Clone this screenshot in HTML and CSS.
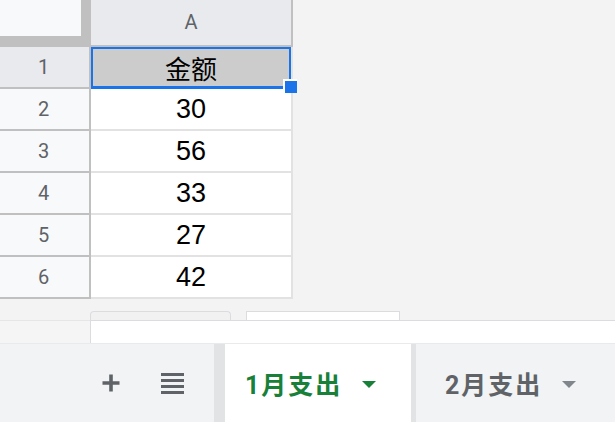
FILE: index.html
```html
<!DOCTYPE html>
<html lang="zh">
<head>
<meta charset="utf-8">
<link rel="stylesheet" href="styles.css">
</head>
<body>
<div class="sheet">
  <div class="grid">
    <div class="corner"><div class="corner-box"></div></div>
    <div class="col-head">A</div>

    <div class="row-head row-head-active">1</div>
    <div class="cell cell-selected">金额<span class="fill-handle"></span></div>

    <div class="row-head">2</div>
    <div class="cell num">30</div>

    <div class="row-head">3</div>
    <div class="cell num">56</div>

    <div class="row-head">4</div>
    <div class="cell num">33</div>

    <div class="row-head">5</div>
    <div class="cell num">27</div>

    <div class="row-head">6</div>
    <div class="cell num">42</div>
  </div>

  <div class="scroll-strip">
    <div class="strip-tab"></div>
    <div class="strip-box"></div>
  </div>

  <div class="hbar">
    <div class="hbar-left"></div>
    <div class="hbar-main"></div>
  </div>

  <div class="tabbar">
    <div class="tools">
      <svg class="icon-plus" width="20" height="20" viewBox="0 0 20 20"><path d="M10 1.5v17M1.5 10h17" stroke="#5f6368" stroke-width="3.6" fill="none"/></svg>
      <svg class="icon-menu" width="23" height="21" viewBox="0 0 23 21"><rect x="0" y="0" width="23" height="3" fill="#5f6368"/><rect x="0" y="6" width="23" height="3" fill="#5f6368"/><rect x="0" y="12" width="23" height="3" fill="#5f6368"/><rect x="0" y="18" width="23" height="3" fill="#5f6368"/></svg>
    </div>
    <div class="sep sep-wide"></div>
    <div class="tab tab-active">
      <span class="tab-label">1月支出</span>
      <span class="caret caret-active"></span>
    </div>
    <div class="sep sep-narrow"></div>
    <div class="tab tab-other">
      <span class="tab-label">2月支出</span>
      <span class="caret caret-other"></span>
    </div>
  </div>
</div>
</body>
</html>
```

FILE: styles.css
```css
html, body {
  margin: 0;
  padding: 0;
}
body {
  width: 615px;
  height: 422px;
  overflow: hidden;
  background: #f3f3f3;
  font-family: Roboto, "Noto Sans CJK SC", sans-serif;
}
.sheet {
  display: flex;
  flex-direction: column;
  height: 422px;
}
.grid {
  display: grid;
  grid-template-columns: 91px 202px;
  grid-template-rows: 47px repeat(6, 42px);
}
.grid > div {
  box-sizing: border-box;
}
.corner {
  background: #c0c0c0;
}
.corner-box {
  width: 81px;
  height: 36px;
  background: #f8f9fa;
}
.col-head {
  background: #e8eaed;
  border-right: 2px solid #c0c0c0;
  border-bottom: 2px solid #c0c0c0;
  color: #5f6368;
  font-size: 20px;
  display: flex;
  align-items: center;
  justify-content: center;
  padding-bottom: 1px;
}
.row-head {
  background: #f8f9fa;
  border-right: 2px solid #c0c0c0;
  border-bottom: 2px solid #c0c0c0;
  color: #5f6368;
  font-size: 20px;
  display: flex;
  align-items: center;
  justify-content: center;
  padding-right: 2px;
}
.row-head-active {
  background: #e8eaed;
}
.cell {
  background: #ffffff;
  border-right: 2px solid #e2e2e2;
  border-bottom: 2px solid #e2e2e2;
  display: flex;
  align-items: center;
  justify-content: center;
  color: #000;
}
.num {
  font-family: "Liberation Sans", Arial, sans-serif;
  font-size: 27px;
}
.cell-selected {
  position: relative;
  background: #cccccc;
  font-family: "Noto Sans CJK SC", sans-serif;
  font-size: 26px;
}
.cell-selected::after {
  content: "";
  position: absolute;
  left: 0;
  top: 0;
  right: 0;
  bottom: -2px;
  border: 2px solid #1a73e8;
  border-bottom-width: 3px;
}
.fill-handle {
  position: absolute;
  left: 192px;
  top: 32px;
  width: 12px;
  height: 12px;
  background: #1a73e8;
  border-left: 2px solid #ffffff;
  border-top: 2px solid #ffffff;
  z-index: 2;
}
.scroll-strip {
  margin-top: 12px;
  height: 9px;
  display: flex;
  padding-left: 90px;
  gap: 15px;
}
.strip-tab {
  width: 141px;
  box-sizing: border-box;
  border: 1px solid #dadce0;
  border-bottom: none;
  border-radius: 4px 4px 0 0;
  background: #f1f1f1;
}
.strip-box {
  width: 154px;
  box-sizing: border-box;
  border: 1px solid #dadce0;
  border-bottom: none;
  background: #ffffff;
}
.hbar {
  display: flex;
  height: 23px;
}
.hbar-left {
  width: 90px;
  background: #f5f5f5;
  border-top: 1px solid #e6e6e6;
}
.hbar-main {
  flex: 1;
  background: #ffffff;
  border-top: 1px solid #dadce0;
  border-left: 1px solid #dadce0;
}
.tabbar {
  flex: 1;
  display: flex;
  background: #f1f3f4;
  border-top: 1px solid #e8eaed;
}
.tools {
  width: 214px;
  box-sizing: border-box;
  padding-left: 101px;
  display: flex;
  align-items: center;
  gap: 40px;
}
.icon-plus, .icon-menu {
  display: block;
}
.sep {
  background: #e1e3e5;
}
.sep-wide {
  width: 11px;
}
.sep-narrow {
  width: 5px;
}
.tab {
  display: flex;
  align-items: center;
  font-size: 25px;
  font-weight: 700;
}
.tab-active {
  width: 186px;
  background: #ffffff;
  padding-left: 20px;
  box-sizing: border-box;
  color: #188038;
}
.tab-other {
  flex: 1;
  padding-left: 29px;
  color: #5f6368;
}
.tab-label {
  letter-spacing: 2px;
}
.caret {
  width: 0;
  height: 0;
  border-left: 7px solid transparent;
  border-right: 7px solid transparent;
  margin-left: 20px;
  margin-top: 2px;
}
.caret-active {
  border-top: 7px solid #188038;
}
.caret-other {
  border-top: 7px solid #80868b;
}
```
